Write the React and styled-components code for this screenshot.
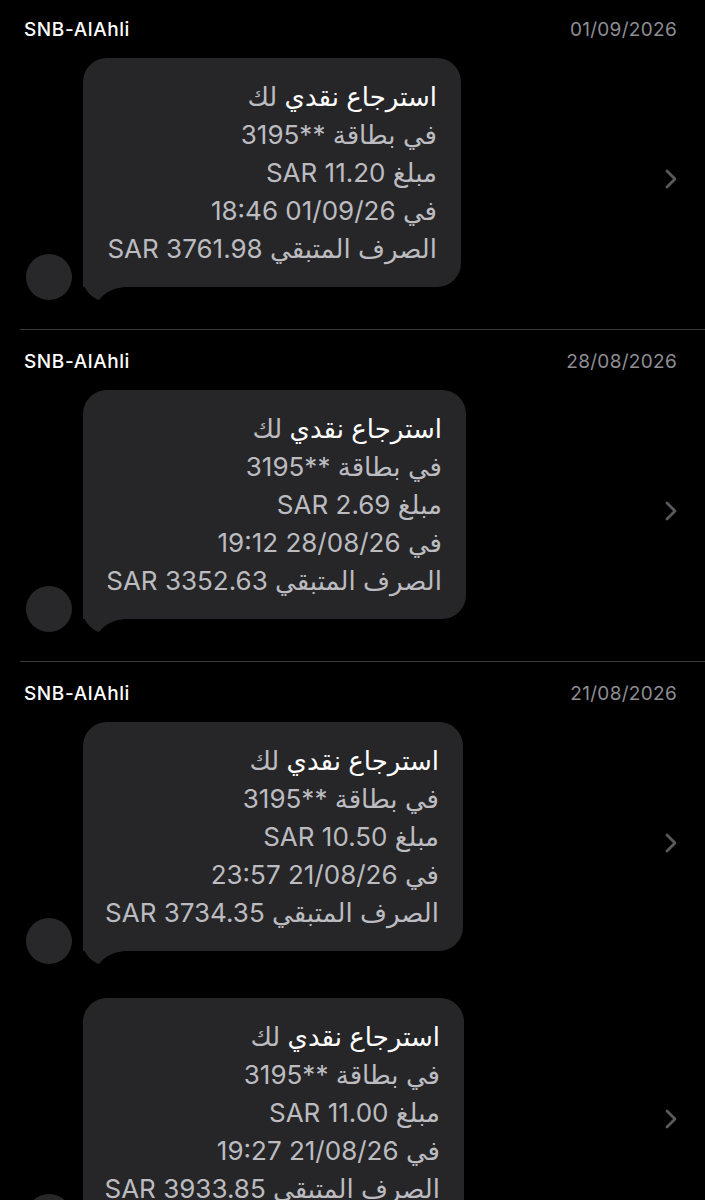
import React from "react";
import styled, { createGlobalStyle } from "styled-components";

const GlobalStyle = createGlobalStyle`
  html, body {
    margin: 0;
    padding: 0;
    background: #000;
    overflow: hidden;
  }
  body {
    font-family: "Inter", "DejaVu Sans", sans-serif;
    -webkit-font-smoothing: antialiased;
  }
`;

const Page = styled.div`
  width: 705px;
  min-height: 1200px;
  background: #000;
`;

const Group = styled.section`
  padding: 20px 0 29px 0;
  &:first-child {
    padding-top: 18px;
  }
`;

const Separator = styled.div`
  height: 1px;
  margin-left: 20px;
  background: #3a3a3d;
`;

const Header = styled.div`
  display: flex;
  justify-content: space-between;
  align-items: center;
  height: 22px;
  padding: 0 28px 0 24px;
  margin-bottom: 18px;
`;

const Sender = styled.span`
  color: #fff;
  font-size: 19px;
  font-weight: 500;
  letter-spacing: 0.6px;
`;

const DateText = styled.span`
  color: #8e8e93;
  font-size: 19px;
  letter-spacing: 0.3px;
`;

const List = styled.div`
  display: flex;
  flex-direction: column;
  gap: 34px;
`;

const Row = styled.div`
  display: flex;
  align-items: flex-end;
  padding: 0 27px 0 26px;
`;

const Avatar = styled.div`
  width: 46px;
  height: 46px;
  border-radius: 50%;
  background: #28282b;
  margin-right: 11px;
  flex-shrink: 0;
`;

const BubbleWrap = styled.div`
  position: relative;
  padding-bottom: 13px;
`;

const Bubble = styled.div`
  position: relative;
  z-index: 1;
  width: ${(p) => p.$width}px;
  box-sizing: border-box;
  padding: 20px 24px 19px 20px;
  background: #262629;
  border-radius: 24px;
  border-bottom-left-radius: 0;
  direction: rtl;
  text-align: right;
  color: #bcbcc0;
  font-size: 26px;
  line-height: 38px;
  white-space: nowrap;
`;

const Line = styled.div``;

const Hit = styled.span`
  color: #fff;
`;

const Tail = styled.svg`
  position: absolute;
  left: 0;
  bottom: 0;
  width: 42px;
  height: 40px;
  z-index: 0;
`;

const Chevron = styled.svg`
  margin-left: auto;
  align-self: center;
  width: 13px;
  height: 20px;
`;

const groups = [
  {
    sender: "SNB-AlAhli",
    date: "01/09/2026",
    messages: [
      { amount: "11.20", when: "01/09/26 18:46", remaining: "3761.98", width: 378 },
    ],
  },
  {
    sender: "SNB-AlAhli",
    date: "28/08/2026",
    messages: [
      { amount: "2.69", when: "28/08/26 19:12", remaining: "3352.63", width: 383 },
    ],
  },
  {
    sender: "SNB-AlAhli",
    date: "21/08/2026",
    messages: [
      { amount: "10.50", when: "21/08/26 23:57", remaining: "3734.35", width: 380 },
      { amount: "11.00", when: "21/08/26 19:27", remaining: "3933.85", width: 381 },
    ],
  },
];

const Message = ({ m }) => (
  <Row>
    <Avatar />
    <BubbleWrap>
      <Bubble $width={m.width}>
        <Line>
          <Hit>استرجاع نقدي</Hit> لك
        </Line>
        <Line>في بطاقة **3195</Line>
        <Line>مبلغ SAR {m.amount}</Line>
        <Line>في {m.when}</Line>
        <Line>الصرف المتبقي SAR {m.remaining}</Line>
      </Bubble>
      <Tail viewBox="0 0 42 40">
        <path
          d="M0 0 L0 18 C0 28 5 34 14 39.5 C15.5 40.2 16.5 39.6 17 39 C21 34 27 28.5 42 27 L42 0 Z"
          fill="#262629"
        />
      </Tail>
    </BubbleWrap>
    <Chevron viewBox="0 0 13 20">
      <path
        d="M2 2 L10 10 L2 18"
        fill="none"
        stroke="#5a5a5e"
        strokeWidth="2.8"
        strokeLinecap="round"
        strokeLinejoin="round"
      />
    </Chevron>
  </Row>
);

export default function App() {
  return (
    <Page>
      <GlobalStyle />
      {groups.map((g, i) => (
        <React.Fragment key={g.date}>
          {i > 0 && <Separator />}
          <Group>
            <Header>
              <Sender>{g.sender}</Sender>
              <DateText>{g.date}</DateText>
            </Header>
            <List>
              {g.messages.map((m) => (
                <Message key={m.when} m={m} />
              ))}
            </List>
          </Group>
        </React.Fragment>
      ))}
    </Page>
  );
}
